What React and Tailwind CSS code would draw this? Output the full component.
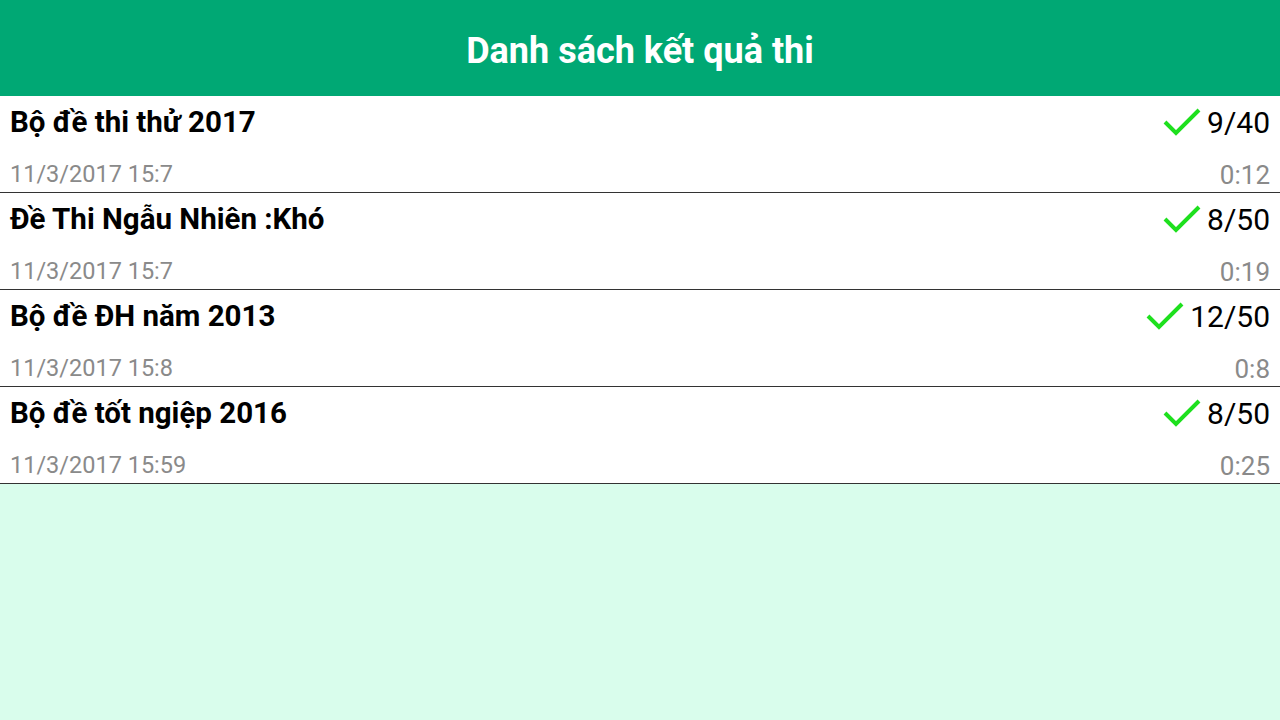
const results = [
  { title: "Bộ đề thi thử 2017", score: "9/40", date: "11/3/2017 15:7", time: "0:12" },
  { title: "Đề Thi Ngẫu Nhiên :Khó", score: "8/50", date: "11/3/2017 15:7", time: "0:19" },
  { title: "Bộ đề ĐH năm 2013", score: "12/50", date: "11/3/2017 15:8", time: "0:8" },
  { title: "Bộ đề tốt ngiệp 2016", score: "8/50", date: "11/3/2017 15:59", time: "0:25" },
];

function Check() {
  return (
    <svg width="38" height="30" viewBox="0 0 38 30" className="shrink-0">
      <path d="M2 15 L13 26 L36 3" fill="none" stroke="#1ee01e" strokeWidth="4" />
    </svg>
  );
}

export default function App() {
  return (
    <div className="w-[1280px] h-[720px] bg-[#d9fdec] flex flex-col" style={{ fontFamily: "Roboto, 'Noto Sans', sans-serif" }}>
      {/* tiêu đề */}
      <div className="h-[96px] pt-[5px] bg-[#00a874] flex items-center justify-center">
        <h1 className="text-white text-[36px] font-bold">Danh sách kết quả thi</h1>
      </div>

      <div className="bg-white">
        {results.map((r, i) => (
          <div key={i} className="h-[97px] px-[10px] flex flex-col justify-between border-b border-[#333]">
            <div className="flex items-center justify-between h-[50px] pt-[2px]">
              <span className="text-[29.5px] font-bold text-black leading-none pt-[2px]">{r.title}</span>
              <div className="flex items-center gap-[6px]">
                <Check />
                <span className="text-[30px] text-black">{r.score}</span>
              </div>
            </div>
            <div className="flex items-center justify-between h-[34px] text-[#8a8a8a]">
              <span className="text-[23.5px]">{r.date}</span>
              <span className="text-[26px]">{r.time}</span>
            </div>
          </div>
        ))}
      </div>
    </div>
  );
}
